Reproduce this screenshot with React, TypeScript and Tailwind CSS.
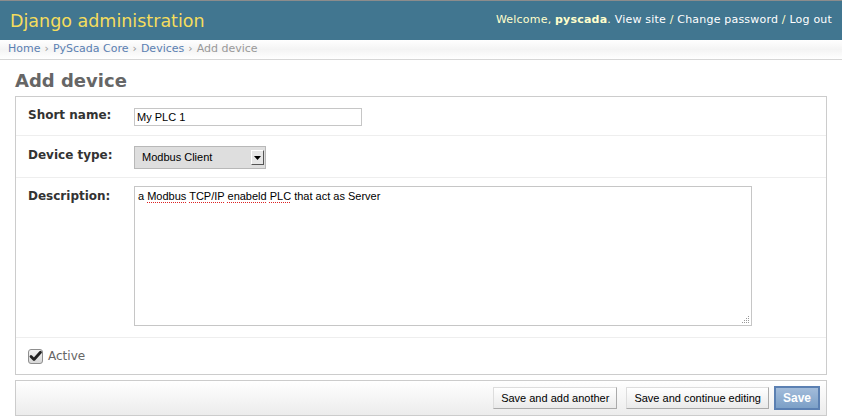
const dejavu = "font-['DejaVu_Sans','Liberation_Sans',sans-serif]";
const arial = "font-['Liberation_Sans',Arial,sans-serif]";

function Typo({ children }: { children: string }) {
  return (
    <span className="underline decoration-dotted decoration-[#d22] decoration-1 underline-offset-[2px]">
      {children}
    </span>
  );
}

function SelectBox() {
  return (
    <div
      className={`flex h-[23px] w-[132px] items-stretch border border-[#b8b8b8] bg-[#dedede] ${arial} text-[11px] text-black`}
    >
      <div className="flex flex-1 items-center pl-[7px]">Modbus Client</div>
      <div className="my-[3px] mr-[1px] flex w-[13px] items-center justify-center border border-t-white border-l-white border-r-[#555] border-b-[#555] bg-[#e6e6e6]">
        <svg width="7" height="4" viewBox="0 0 7 4">
          <path d="M0 0h7L3.5 4z" fill="#000" />
        </svg>
      </div>
    </div>
  );
}

function CheckIcon() {
  return (
    <svg width="15" height="15" viewBox="0 0 15 15">
      <defs>
        <linearGradient id="cb" x1="0" y1="0" x2="0" y2="1">
          <stop offset="0" stopColor="#f4f4f4" />
          <stop offset="1" stopColor="#d6d6d6" />
        </linearGradient>
      </defs>
      <rect x="0.5" y="0.5" width="14" height="14" rx="2.5" fill="url(#cb)" stroke="#8e8e8e" />
      <path d="M3 7.5l3 3L12.5 3.2" fill="none" stroke="#222" strokeWidth="2.8" strokeLinecap="round" strokeLinejoin="round" />
    </svg>
  );
}

function Grip() {
  const dots = [
    [6, 0],
    [4, 2],
    [6, 2],
    [2, 4],
    [4, 4],
    [6, 4],
    [0, 6],
    [2, 6],
    [4, 6],
    [6, 6],
  ];
  return (
    <svg width="8" height="8" viewBox="0 0 8 8" className="absolute bottom-[1px] right-[1px]">
      {dots.map(([x, y], i) => (
        <rect key={i} x={x} y={y} width="1" height="1" fill="#999" />
      ))}
    </svg>
  );
}

export default function App() {
  return (
    <div className={`min-h-[416px] w-[842px] bg-white ${dejavu}`}>
      <div className="h-px bg-[#8c8c8c]" />
      <div className="flex h-[39px] items-center justify-between bg-[#417690]">
        <h1 className="pt-[2px] pl-[10px] text-[17.5px] leading-[21px] text-[#f5dd5d]">Django administration</h1>
        <div className="pr-[10px] text-[11px] tracking-[0.2px] text-[#ffffcc]">
          Welcome, <strong className="font-bold">pyscada</strong>.{" "}
          <span className="text-white">View site</span> / <span className="text-white">Change password</span> /{" "}
          <span className="text-white">Log out</span>
        </div>
      </div>

      <div className="flex h-[20px] items-center border-b border-[#d6d6d6] bg-linear-to-b from-white via-[#f4f4f4] to-white px-[8px] text-[11px] text-[#999]">
        <span className="text-[#5b80b2]">Home</span>
        <span className="px-[4px]">›</span>
        <span className="text-[#5b80b2]">PyScada Core</span>
        <span className="px-[4px]">›</span>
        <span className="text-[#5b80b2]">Devices</span>
        <span className="px-[4px]">›</span>
        <span>Add device</span>
      </div>

      <div className="px-[15px]">
        <h1 className="mt-[10px] mb-[5px] text-[18px] leading-[21px] font-bold text-[#666]">Add device</h1>

        <div className="border border-[#ccc] bg-white">
          <div className="flex h-[39px] items-start border-b border-[#eee] px-[12px] pt-[11px]">
            <label className="w-[106px] text-[12px] leading-[14px] font-bold text-[#333]">Short name:</label>
            <div className={`flex h-[18px] w-[228px] items-center border border-[#c6c6c6] pl-[2px] ${arial} text-[11px] text-black`}>
              My PLC 1
            </div>
          </div>

          <div className="flex h-[42px] items-start border-b border-[#eee] px-[12px] pt-[10px]">
            <label className="mt-[2px] w-[106px] text-[12px] leading-[14px] font-bold text-[#333]">Device type:</label>
            <SelectBox />
          </div>

          <div className="flex h-[160px] items-start border-b border-[#eee] px-[12px] pt-[8px]">
            <label className="mt-[3px] w-[106px] text-[12px] leading-[14px] font-bold text-[#333]">Description:</label>
            <div
              className={`relative h-[140px] w-[618px] border border-[#c6c6c6] px-[3px] pt-[3px] ${arial} text-[11px] leading-[13px] text-black`}
            >
              a <Typo>Modbus</Typo> <Typo>TCP/IP</Typo> <Typo>enabeld</Typo> <Typo>PLC</Typo> that act as Server
              <Grip />
            </div>
          </div>

          <div className="flex h-[36px] items-center gap-[5px] px-[12px]">
            <CheckIcon />
            <span className="text-[12px] text-[#666]">Active</span>
          </div>
        </div>

        <div className="mt-[5px] flex h-[36px] items-center justify-end border border-[#ccc] bg-linear-to-b from-white to-[#ececec] pr-[6px]">
          <button className={`h-[22px] border border-t-[#ddd] border-l-[#ddd] border-r-[#aaa] border-b-[#aaa] bg-linear-to-b from-white to-[#eaeaea] px-[7px] ${arial} text-[11px] text-black`}>
            Save and add another
          </button>
          <button className={`ml-[9px] h-[22px] border border-t-[#ddd] border-l-[#ddd] border-r-[#aaa] border-b-[#aaa] bg-linear-to-b from-white to-[#eaeaea] px-[7px] ${arial} text-[11px] text-black`}>
            Save and continue editing
          </button>
          <button className={`ml-[5px] h-[24px] w-[46px] border-2 border-[#5b80b2] bg-linear-to-b from-[#a3bcda] to-[#7ca0c7] ${arial} text-[12px] font-bold text-white`}>
            Save
          </button>
        </div>
      </div>
    </div>
  );
}
